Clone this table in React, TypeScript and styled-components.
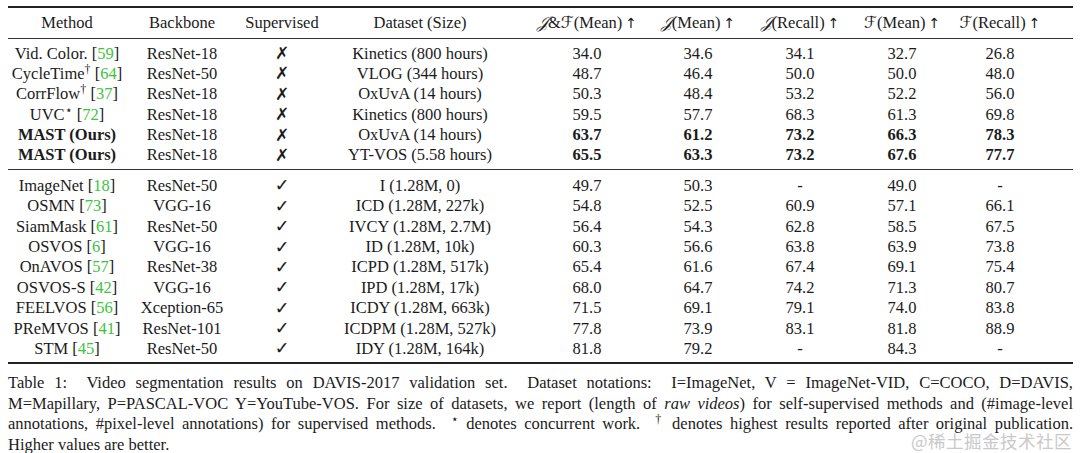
import styled, { createGlobalStyle } from "styled-components";

const GlobalStyle = createGlobalStyle`
  body {
    margin: 0;
    background: #ffffff;
    color: #1b1b1b;
    font-family: "Liberation Serif", "Times New Roman", serif;
  }
`;

const COLUMNS = "118px 112px 88px 188px 146px 76px 128px 76px 120px";

const Page = styled.div`
  width: 1080px;
  height: 453px;
  box-sizing: border-box;
  padding: 6px 7px 0 8px;
  position: relative;
  overflow: hidden;
`;

const Table = styled.div`
  border-top: 2px solid #222;
  border-bottom: 2px solid #222;
  font-size: 16.5px;
`;

const HeaderRow = styled.div`
  display: grid;
  grid-template-columns: ${COLUMNS};
  height: 30px;
  align-items: center;
  border-bottom: 1px solid #333;
`;

const Block = styled.div<{ $top: number; $bottom: number; $rule?: boolean }>`
  padding-top: ${(p) => p.$top}px;
  padding-bottom: ${(p) => p.$bottom}px;
  border-bottom: ${(p) => (p.$rule ? "1px solid #333" : "none")};
`;

const Row = styled.div`
  display: grid;
  grid-template-columns: ${COLUMNS};
  height: 20.4px;
  align-items: center;
`;

const Cell = styled.div<{ $bold?: boolean }>`
  text-align: center;
  white-space: nowrap;
  line-height: 20px;
  font-weight: ${(p) => (p.$bold ? 700 : 400)};
`;

const Ref = styled.span`
  color: #3cc43c;
`;

const Sup = styled.sup`
  font-size: 12px;
  line-height: 0;
  vertical-align: 6px;
`;

const Script = styled.span`
  font-family: "DejaVu Serif", "DejaVu Sans", serif;
  font-style: italic;
  font-size: 16.5px;
`;

const Arrow = styled.span`
  font-family: "DejaVu Sans", sans-serif;
  font-size: 14px;
  margin-left: 3px;
`;

const Mark = styled.span<{ $size: number }>`
  font-family: "DejaVu Sans", sans-serif;
  font-size: ${(p) => p.$size}px;
  line-height: 20px;
  font-weight: 700;
`;

const Caption = styled.div`
  margin-top: 9px;
  font-size: 16.5px;
  line-height: 20.7px;
`;

const CaptionLine = styled.div<{ $last?: boolean }>`
  text-align: justify;
  text-align-last: ${(p) => (p.$last ? "left" : "justify")};
  white-space: pre-wrap;
`;

const Watermark = styled.div`
  position: absolute;
  right: 8px;
  bottom: 2px;
  font-family: "Noto Sans CJK SC", sans-serif;
  font-size: 17.5px;
  line-height: 20px;
  color: #c9c9c9;
  letter-spacing: 0.5px;
`;

type Entry = {
  name: string;
  sup?: string;
  refNo?: string;
  bold?: boolean;
  backbone: string;
  dataset: string;
  values: string[];
};

const selfSup: Entry[] = [
  { name: "Vid. Color.", refNo: "59", backbone: "ResNet-18", dataset: "Kinetics (800 hours)", values: ["34.0", "34.6", "34.1", "32.7", "26.8"] },
  { name: "CycleTime", sup: "†", refNo: "64", backbone: "ResNet-50", dataset: "VLOG (344 hours)", values: ["48.7", "46.4", "50.0", "50.0", "48.0"] },
  { name: "CorrFlow", sup: "†", refNo: "37", backbone: "ResNet-18", dataset: "OxUvA (14 hours)", values: ["50.3", "48.4", "53.2", "52.2", "56.0"] },
  { name: "UVC", sup: "⋆", refNo: "72", backbone: "ResNet-18", dataset: "Kinetics (800 hours)", values: ["59.5", "57.7", "68.3", "61.3", "69.8"] },
  { name: "MAST (Ours)", bold: true, backbone: "ResNet-18", dataset: "OxUvA (14 hours)", values: ["63.7", "61.2", "73.2", "66.3", "78.3"] },
  { name: "MAST (Ours)", bold: true, backbone: "ResNet-18", dataset: "YT-VOS (5.58 hours)", values: ["65.5", "63.3", "73.2", "67.6", "77.7"] },
];

const supervised: Entry[] = [
  { name: "ImageNet", refNo: "18", backbone: "ResNet-50", dataset: "I (1.28M, 0)", values: ["49.7", "50.3", "-", "49.0", "-"] },
  { name: "OSMN", refNo: "73", backbone: "VGG-16", dataset: "ICD (1.28M, 227k)", values: ["54.8", "52.5", "60.9", "57.1", "66.1"] },
  { name: "SiamMask", refNo: "61", backbone: "ResNet-50", dataset: "IVCY (1.28M, 2.7M)", values: ["56.4", "54.3", "62.8", "58.5", "67.5"] },
  { name: "OSVOS", refNo: "6", backbone: "VGG-16", dataset: "ID (1.28M, 10k)", values: ["60.3", "56.6", "63.8", "63.9", "73.8"] },
  { name: "OnAVOS", refNo: "57", backbone: "ResNet-38", dataset: "ICPD (1.28M, 517k)", values: ["65.4", "61.6", "67.4", "69.1", "75.4"] },
  { name: "OSVOS-S", refNo: "42", backbone: "VGG-16", dataset: "IPD (1.28M, 17k)", values: ["68.0", "64.7", "74.2", "71.3", "80.7"] },
  { name: "FEELVOS", refNo: "56", backbone: "Xception-65", dataset: "ICDY (1.28M, 663k)", values: ["71.5", "69.1", "79.1", "74.0", "83.8"] },
  { name: "PReMVOS", refNo: "41", backbone: "ResNet-101", dataset: "ICDPM (1.28M, 527k)", values: ["77.8", "73.9", "83.1", "81.8", "88.9"] },
  { name: "STM", refNo: "45", backbone: "ResNet-50", dataset: "IDY (1.28M, 164k)", values: ["81.8", "79.2", "-", "84.3", "-"] },
];

const TableRow = ({ entry, mark, markSize }: { entry: Entry; mark: string; markSize: number }) => (
  <Row>
    <Cell $bold={entry.bold}>
      {entry.name}
      {entry.sup && <Sup>{entry.sup}</Sup>}
      {entry.refNo && (
        <>
          {" "}[<Ref>{entry.refNo}</Ref>]
        </>
      )}
    </Cell>
    <Cell>{entry.backbone}</Cell>
    <Cell>
      <Mark $size={markSize}>{mark}</Mark>
    </Cell>
    <Cell>{entry.dataset}</Cell>
    {entry.values.map((v, i) => (
      <Cell key={i} $bold={entry.bold}>
        {v}
      </Cell>
    ))}
  </Row>
);

export default function App() {
  return (
    <>
      <GlobalStyle />
      <Page>
        <Table>
          <HeaderRow>
            <Cell>Method</Cell>
            <Cell>Backbone</Cell>
            <Cell>Supervised</Cell>
            <Cell>Dataset (Size)</Cell>
            <Cell>
              <Script>𝒥</Script>&amp;<Script>ℱ</Script>(Mean)<Arrow>↑</Arrow>
            </Cell>
            <Cell>
              <Script>𝒥</Script>(Mean)<Arrow>↑</Arrow>
            </Cell>
            <Cell>
              <Script>𝒥</Script>(Recall)<Arrow>↑</Arrow>
            </Cell>
            <Cell>
              <Script>ℱ</Script>(Mean)<Arrow>↑</Arrow>
            </Cell>
            <Cell>
              <Script>ℱ</Script>(Recall)<Arrow>↑</Arrow>
            </Cell>
          </HeaderRow>
          <Block $top={4} $bottom={4} $rule>
            {selfSup.map((e, i) => (
              <TableRow key={i} entry={e} mark="✗" markSize={17} />
            ))}
          </Block>
          <Block $top={5} $bottom={3}>
            {supervised.map((e, i) => (
              <TableRow key={i} entry={e} mark="✓" markSize={17.5} />
            ))}
          </Block>
        </Table>
        <Caption>
          <CaptionLine>
            Table 1:  Video segmentation results on DAVIS-2017 validation set.  Dataset notations:  I=ImageNet, V = ImageNet-VID, C=COCO, D=DAVIS,
          </CaptionLine>
          <CaptionLine>
            M=Mapillary, P=PASCAL-VOC Y=YouTube-VOS. For size of datasets, we report (length of <i>raw videos</i>) for self-supervised methods and (#image-level
          </CaptionLine>
          <CaptionLine>
            annotations, #pixel-level annotations) for supervised methods.  <Sup>⋆</Sup> denotes concurrent work.  <Sup>†</Sup> denotes highest results reported after original publication.
          </CaptionLine>
          <CaptionLine $last>Higher values are better.</CaptionLine>
        </Caption>
        <Watermark>@稀土掘金技术社区</Watermark>
      </Page>
    </>
  );
}
